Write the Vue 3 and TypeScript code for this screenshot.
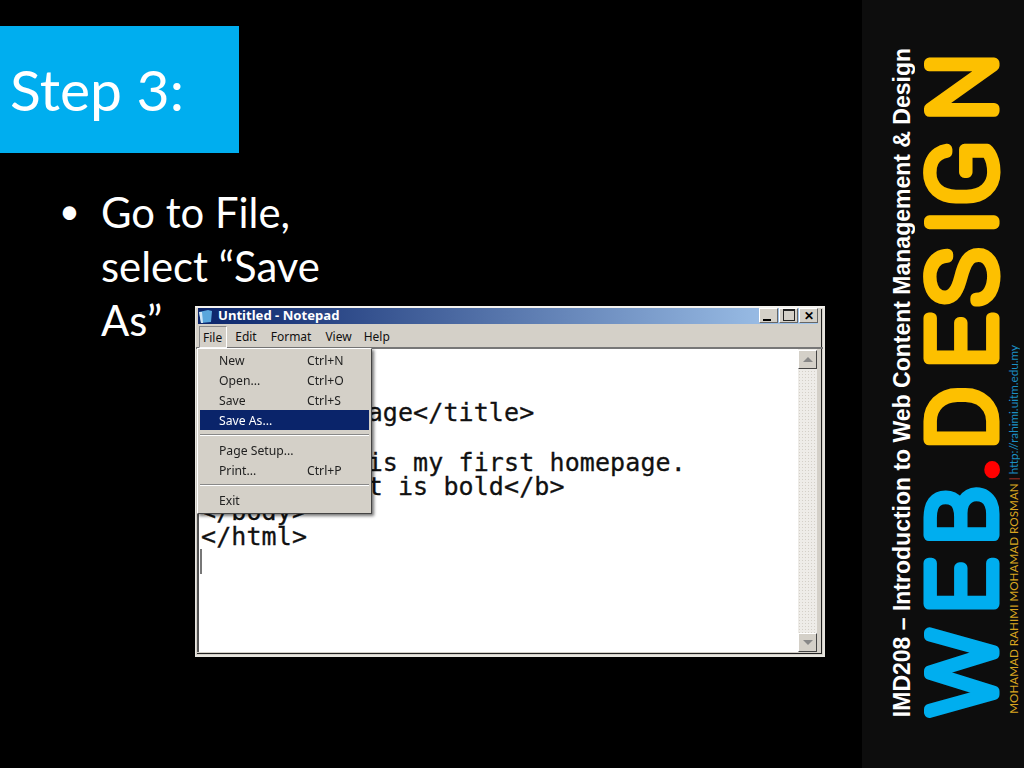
<script setup lang="ts">
const editorLines: string[] = [
  '<html>',
  '<head>',
  '<title>My page</title>',
  '<body>',
  'Hello This is my first homepage.',
  '<b>This text is bold</b>',
  '</body>',
  '</html>',
]
const menuGroups = [
  [
    { label: 'New', key: 'Ctrl+N' },
    { label: 'Open...', key: 'Ctrl+O' },
    { label: 'Save', key: 'Ctrl+S' },
    { label: 'Save As...', key: '', active: true },
  ],
  [
    { label: 'Page Setup...', key: '' },
    { label: 'Print...', key: 'Ctrl+P' },
  ],
  [{ label: 'Exit', key: '' }],
]
</script>

<template>
  <div class="slide">
    <main class="content">
      <h1 class="step">Step 3:</h1>
      <div class="stage">
        <ul class="bullets">
          <li>Go to File, select “Save As”</li>
        </ul>
        <div class="notepad">
          <div class="titlebar">
            <svg class="appicon" width="15" height="15" viewBox="0 0 15 15">
              <path d="M1 3 L10 1 L14 2 L13 13 L3 14 Z" fill="#5aa7dc" />
              <path d="M1 3 L4 3 L5 14 L3 14 Z" fill="#cfe6f5" />
            </svg>
            <span class="title">Untitled - Notepad</span>
            <div class="winbtns">
              <span class="winbtn"><i class="min"></i></span>
              <span class="winbtn"><i class="max"></i></span>
              <span class="winbtn close">✕</span>
            </div>
          </div>
          <div class="menubar">
            <span class="menu open">File</span>
            <span class="menu">Edit</span>
            <span class="menu">Format</span>
            <span class="menu">View</span>
            <span class="menu">Help</span>
          </div>
          <div class="editor">
            <div class="textarea">
              <pre class="code"><template v-for="l in editorLines" :key="l">{{ l }}
</template></pre>
              <div class="caret"></div>
            </div>
            <div class="scrollbar">
              <span class="arrow"><i class="up"></i></span>
              <span class="arrow"><i class="down"></i></span>
            </div>
          </div>
          <div class="dropdown">
            <template v-for="(g, i) in menuGroups" :key="i">
              <div v-if="i > 0" class="sep"></div>
              <div v-for="m in g" :key="m.label" class="item" :class="{ active: m.active }">
                <span>{{ m.label }}</span><span class="key">{{ m.key }}</span>
              </div>
            </template>
          </div>
        </div>
      </div>
    </main>
    <aside class="side">
      <div class="course">IMD208 – Introduction to Web Content Management &amp; Design</div>
      <svg class="logo" width="90" height="680" viewBox="0 0 90 680">
        <text transform="translate(79.5 667) rotate(-90) scale(1.04 1)" class="logotext">
          <tspan class="blue" x="0 98 164">WEB</tspan><tspan class="red" x="226.5" dy="3">.</tspan><tspan class="gold" x="256 334 394 462 490 572" dy="-3">DESIGN</tspan>
        </text>
      </svg>
      <div class="credit">
        <span class="name">MOHAMAD RAHIMI MOHAMAD ROSMAN</span>
        <span class="bar"> | </span>
        <span class="url">http://rahimi.uitm.edu.my</span>
      </div>
    </aside>
  </div>
</template>

<style>
html, body { margin: 0; background: #000; }
</style>

<style scoped>
.slide { width: 1024px; height: 768px; display: flex; background: #000; overflow: hidden; font-family: "Lato", sans-serif; color: #fff; }
.content { width: 862px; display: flex; flex-direction: column; }
.step { margin: 26px 0 0; width: 239px; height: 127px; box-sizing: border-box; padding: 30px 0 0 10px; background: #00aeef; font: 400 57px/66px "Lato", sans-serif; }
.stage { display: grid; }
.bullets { grid-area: 1 / 1; margin: 0; padding: 32px 0 0 101px; width: 232px; font-size: 41.8px; line-height: 54px; list-style: none; position: relative; }
.bullets li { position: relative; }
.bullets li::before { content: "•"; position: absolute; left: -42px; top: -2px; font-size: 36px; }
.notepad { grid-area: 1 / 1; position: relative; margin: 153px 0 0 195px; width: 630px; height: 351px; box-sizing: border-box; display: flex; flex-direction: column; background: #d4d0c8; border-top: 2px solid #f4f2ee; border-left: 1px solid #e8e6e0; border-right: 2px solid #e8e6e0; border-bottom: 2px solid #e8e6e0; box-shadow: inset 0 0 0 1px #d4d0c8, inset -2px -2px 0 #222; font-family: "Noto Sans", sans-serif; filter: blur(0.4px); }
.titlebar { height: 16px; margin: 0 5px 0 2px; padding-bottom: 2px; box-sizing: border-box; display: flex; align-items: center; background: linear-gradient(90deg, #0a246a, #a6caf0); color: #fff; }
.appicon { margin-right: 5px; margin-top: 2px; }
.title { font: 700 13.1px "Noto Sans", sans-serif; }
.winbtns { margin-left: auto; display: flex; align-self: flex-start; }
.winbtn { width: 19px; height: 15px; margin-left: 1px; box-sizing: border-box; background: #d4d0c8; border: 1px solid; border-color: #fff #666 #666 #fff; position: relative; color: #000; font-size: 12px; line-height: 13px; text-align: center; font-weight: 700; }
.min { position: absolute; left: 3px; bottom: 1px; width: 8px; height: 2px; background: #000; }
.max { position: absolute; left: 3px; top: 0; width: 12px; height: 12px; box-sizing: border-box; border: 1px solid #222; border-top-width: 2px; }
.menubar { height: 25px; display: flex; align-items: center; padding-left: 3px; font-size: 12px; color: #111; border-bottom: 2px solid #777; box-sizing: border-box; padding-top: 2px; }
.menu { padding: 0 7px; height: 22px; line-height: 22px; }
.menu:nth-child(5) { padding-left: 6px; }
.menu:nth-child(4) { padding-right: 6px; }
.menu:nth-child(3) { padding-right: 7px; }
.menu.open { padding: 0 4px 0 3px; margin-right: 1px; border: 1px solid; border-color: #888 #fff #fff #888; box-sizing: border-box; height: 22px; line-height: 22px; }
.editor { flex: 1; display: flex; background: #fff; margin: 0 6px 3px 1px; border-left: 2px solid #555; min-height: 0; }
.textarea { flex: 1; position: relative; padding: 2.5px 0 0 2px; overflow: hidden; }
.code { margin: 0; font: 25px/24.8px "DejaVu Sans Mono", monospace; letter-spacing: 0.1px; color: #111; -webkit-text-stroke: 0.3px #111; }
.caret { position: absolute; left: 1px; top: 200px; width: 2px; height: 25px; background: #777; }
.scrollbar { width: 19px; display: flex; flex-direction: column; justify-content: space-between; background-color: #eeece8; background-image: radial-gradient(#d4d0c8 1px, transparent 1px); background-size: 3px 3px; padding: 1px 0 0; }
.arrow { height: 19px; box-sizing: border-box; background: #d4d0c8; border: 1px solid; border-color: #fff #444 #444 #fff; display: flex; align-items: center; justify-content: center; }
.up, .down { width: 0; height: 0; border-left: 5px solid transparent; border-right: 5px solid transparent; }
.up { border-bottom: 5px solid #888; }
.down { border-top: 5px solid #888; }
.dropdown { position: absolute; left: 1px; top: 40px; width: 175px; box-sizing: border-box; padding: 1px 2px 3px; background: #d4d0c8; border: 1px solid; border-color: #fff #444 #444 #fff; box-shadow: 2px 2px 3px rgba(0, 0, 0, 0.55); font-size: 12.2px; color: #222; }
.item { height: 20px; line-height: 22px; display: flex; padding-left: 19px; }
.item.active { background: #0a246a; color: #fff; }
.key { position: absolute; left: 109px; }
.sep { height: 1px; margin: 4px 0 4px; background: #888; border-bottom: 1px solid #fff; }
.side { width: 162px; background: #0d0d0d; display: flex; position: relative; padding: 0 0 0 28px; box-sizing: border-box; align-items: flex-end; }
.course { writing-mode: vertical-rl; transform: rotate(180deg); font: 700 23px/24px "Liberation Sans", sans-serif; white-space: nowrap; margin-bottom: 51px; color: #fff; }
.logo { margin-bottom: 40px; overflow: visible; }
.logotext { font: 100 90px "Roboto", sans-serif; stroke-width: 11px; stroke-linejoin: round; stroke-linecap: round; }
.blue { fill: #00aeef; stroke: #00aeef; }
.red { fill: #ff0000; stroke: #ff0000; font-size: 64px; font-weight: 900; stroke-width: 5px; }
.gold { fill: #fdc000; stroke: #fdc000; }
.credit { writing-mode: vertical-rl; transform: rotate(180deg); font: 400 11.7px/14px "Lato", sans-serif; white-space: pre; margin-left: 2px; margin-bottom: 54px; }
.name { color: #d9a520; }
.bar { color: #c0392b; }
.url { color: #1b8fc4; }
</style>
